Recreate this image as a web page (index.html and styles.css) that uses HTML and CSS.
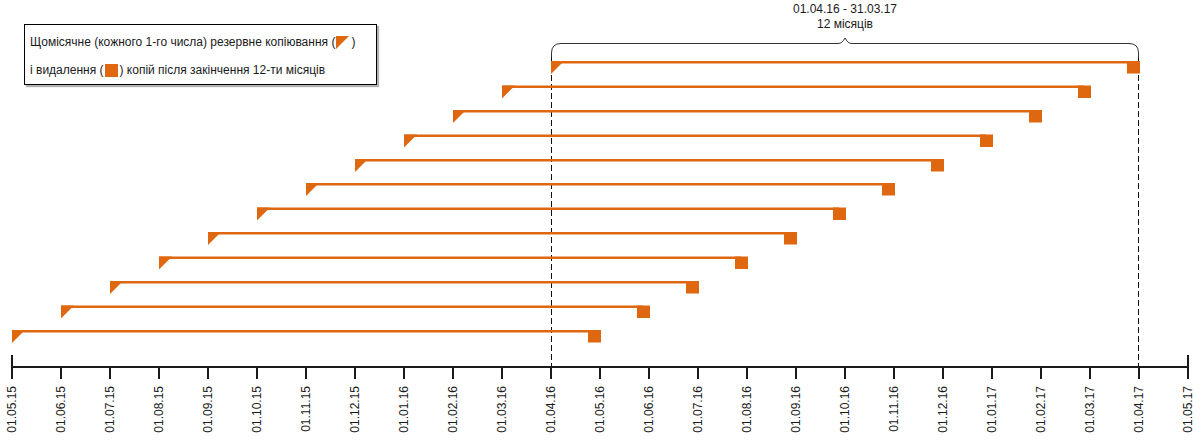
FILE: index.html
```html
<!DOCTYPE html>
<html lang="uk">
<head>
<meta charset="utf-8">
<title>Щомісячне резервне копіювання</title>
<link rel="stylesheet" href="styles.css">
</head>
<body>
<div class="canvas">
  <svg class="chart" width="1200" height="440" viewBox="0 0 1200 440" xmlns="http://www.w3.org/2000/svg">
    <defs>
      <g id="bar">
        <line class="bar-line" x1="0" y1="1.25" x2="582" y2="1.25"/>
        <polygon class="mark" points="0,0 13,0 0,13"/>
        <rect class="mark" x="576" y="0" width="13" height="12.5"/>
      </g>
    </defs>

    <text class="range" x="845" y="13">01.04.16 - 31.03.17</text>
    <text class="range" x="845" y="28">12 місяців</text>
    <path class="brace" d="M551.5,57 L551.5,53 Q551.5,43.5 561,43.5 L838,43.5 C842,43.5 843,41 845,38 C847,41 848,43.5 852,43.5 L1129,43.5 Q1138.5,43.5 1138.5,53 L1138.5,57"/>

    <line class="dash" x1="551.5" y1="57" x2="551.5" y2="367"/>
    <line class="dash" x1="1138.5" y1="57" x2="1138.5" y2="367"/>

    <use href="#bar" x="551" y="61"/>
    <use href="#bar" x="502" y="85.5"/>
    <use href="#bar" x="453" y="110"/>
    <use href="#bar" x="404" y="134.5"/>
    <use href="#bar" x="355" y="159"/>
    <use href="#bar" x="306" y="183"/>
    <use href="#bar" x="257" y="207.5"/>
    <use href="#bar" x="208" y="232"/>
    <use href="#bar" x="159" y="256.5"/>
    <use href="#bar" x="110" y="281"/>
    <use href="#bar" x="61" y="305.5"/>
    <use href="#bar" x="12" y="330"/>

    <line class="axis" x1="12" y1="367" x2="1188" y2="367"/>
    <g class="ticks">
      <line x1="12" y1="355" x2="12" y2="379"/>
      <line x1="61" y1="367" x2="61" y2="379"/>
      <line x1="110" y1="367" x2="110" y2="379"/>
      <line x1="159" y1="367" x2="159" y2="379"/>
      <line x1="208" y1="367" x2="208" y2="379"/>
      <line x1="257" y1="367" x2="257" y2="379"/>
      <line x1="306" y1="367" x2="306" y2="379"/>
      <line x1="355" y1="367" x2="355" y2="379"/>
      <line x1="404" y1="367" x2="404" y2="379"/>
      <line x1="453" y1="367" x2="453" y2="379"/>
      <line x1="502" y1="367" x2="502" y2="379"/>
      <line x1="551" y1="367" x2="551" y2="379"/>
      <line x1="600" y1="367" x2="600" y2="379"/>
      <line x1="649" y1="367" x2="649" y2="379"/>
      <line x1="698" y1="367" x2="698" y2="379"/>
      <line x1="747" y1="367" x2="747" y2="379"/>
      <line x1="796" y1="367" x2="796" y2="379"/>
      <line x1="845" y1="367" x2="845" y2="379"/>
      <line x1="894" y1="367" x2="894" y2="379"/>
      <line x1="943" y1="367" x2="943" y2="379"/>
      <line x1="992" y1="367" x2="992" y2="379"/>
      <line x1="1041" y1="367" x2="1041" y2="379"/>
      <line x1="1090" y1="367" x2="1090" y2="379"/>
      <line x1="1139" y1="367" x2="1139" y2="379"/>
      <line x1="1188" y1="355" x2="1188" y2="379"/>
    </g>
    <g class="labels">
      <text transform="translate(16,386) rotate(-90)">01.05.15</text>
      <text transform="translate(65,386) rotate(-90)">01.06.15</text>
      <text transform="translate(114,386) rotate(-90)">01.07.15</text>
      <text transform="translate(163,386) rotate(-90)">01.08.15</text>
      <text transform="translate(212,386) rotate(-90)">01.09.15</text>
      <text transform="translate(261,386) rotate(-90)">01.10.15</text>
      <text transform="translate(310,386) rotate(-90)">01.11.15</text>
      <text transform="translate(359,386) rotate(-90)">01.12.15</text>
      <text transform="translate(408,386) rotate(-90)">01.01.16</text>
      <text transform="translate(457,386) rotate(-90)">01.02.16</text>
      <text transform="translate(506,386) rotate(-90)">01.03.16</text>
      <text transform="translate(555,386) rotate(-90)">01.04.16</text>
      <text transform="translate(604,386) rotate(-90)">01.05.16</text>
      <text transform="translate(653,386) rotate(-90)">01.06.16</text>
      <text transform="translate(702,386) rotate(-90)">01.07.16</text>
      <text transform="translate(751,386) rotate(-90)">01.08.16</text>
      <text transform="translate(800,386) rotate(-90)">01.09.16</text>
      <text transform="translate(849,386) rotate(-90)">01.10.16</text>
      <text transform="translate(898,386) rotate(-90)">01.11.16</text>
      <text transform="translate(947,386) rotate(-90)">01.12.16</text>
      <text transform="translate(996,386) rotate(-90)">01.01.17</text>
      <text transform="translate(1045,386) rotate(-90)">01.02.17</text>
      <text transform="translate(1094,386) rotate(-90)">01.03.17</text>
      <text transform="translate(1143,386) rotate(-90)">01.04.17</text>
      <text transform="translate(1192,386) rotate(-90)">01.05.17</text>
    </g>
  </svg>

  <div class="legend">
    <div class="legend-row">Щомісячне (кожного 1-го числа) резервне копіювання (<svg class="ico" width="13" height="13" viewBox="0 0 13 13"><polygon class="mark" points="0,0 13,0 0,13"/></svg>)</div>
    <div class="legend-row">і видалення (<svg class="ico" width="13" height="13" viewBox="0 0 13 13"><rect class="mark" x="0" y="0" width="13" height="13"/></svg>) копій після закінчення 12-ти місяців</div>
  </div>
</div>
</body>
</html>
```

FILE: styles.css
```css
html, body {
  margin: 0;
  padding: 0;
  background: #ffffff;
}

.canvas {
  position: relative;
  width: 1200px;
  height: 440px;
  overflow: hidden;
  font-family: "Liberation Sans", Arial, sans-serif;
  color: #1a1a1a;
}

.chart {
  position: absolute;
  left: 0;
  top: 0;
  display: block;
}

.bar-line {
  stroke: #df6710;
  stroke-width: 2.5;
}

.mark {
  fill: #df6710;
}

.axis {
  stroke: #1a1a1a;
  stroke-width: 2;
}

.ticks line {
  stroke: #1a1a1a;
  stroke-width: 2;
}

.labels text {
  font-family: "Liberation Sans", Arial, sans-serif;
  font-size: 12px;
  fill: #1a1a1a;
  text-anchor: end;
}

.range {
  font-family: "Liberation Sans", Arial, sans-serif;
  font-size: 12px;
  fill: #1a1a1a;
  text-anchor: middle;
}

.brace {
  fill: none;
  stroke: #333333;
  stroke-width: 1;
}

.dash {
  stroke: #111111;
  stroke-width: 1;
  stroke-dasharray: 6 3;
}

.legend {
  position: absolute;
  left: 24px;
  top: 24px;
  width: 353px;
  height: 61px;
  box-sizing: border-box;
  border: 1px solid #000000;
  box-shadow: 2px 2px 1px rgba(0, 0, 0, 0.3);
  background: #ffffff;
  padding: 7px 0 0 5px;
  display: flex;
  flex-direction: column;
  gap: 8px;
  font-size: 12px;
}

.legend-row {
  height: 20px;
  display: flex;
  align-items: center;
  white-space: pre;
}

.ico {
  display: block;
  margin: 0 2px 0 1px;
  flex: none;
}
```
